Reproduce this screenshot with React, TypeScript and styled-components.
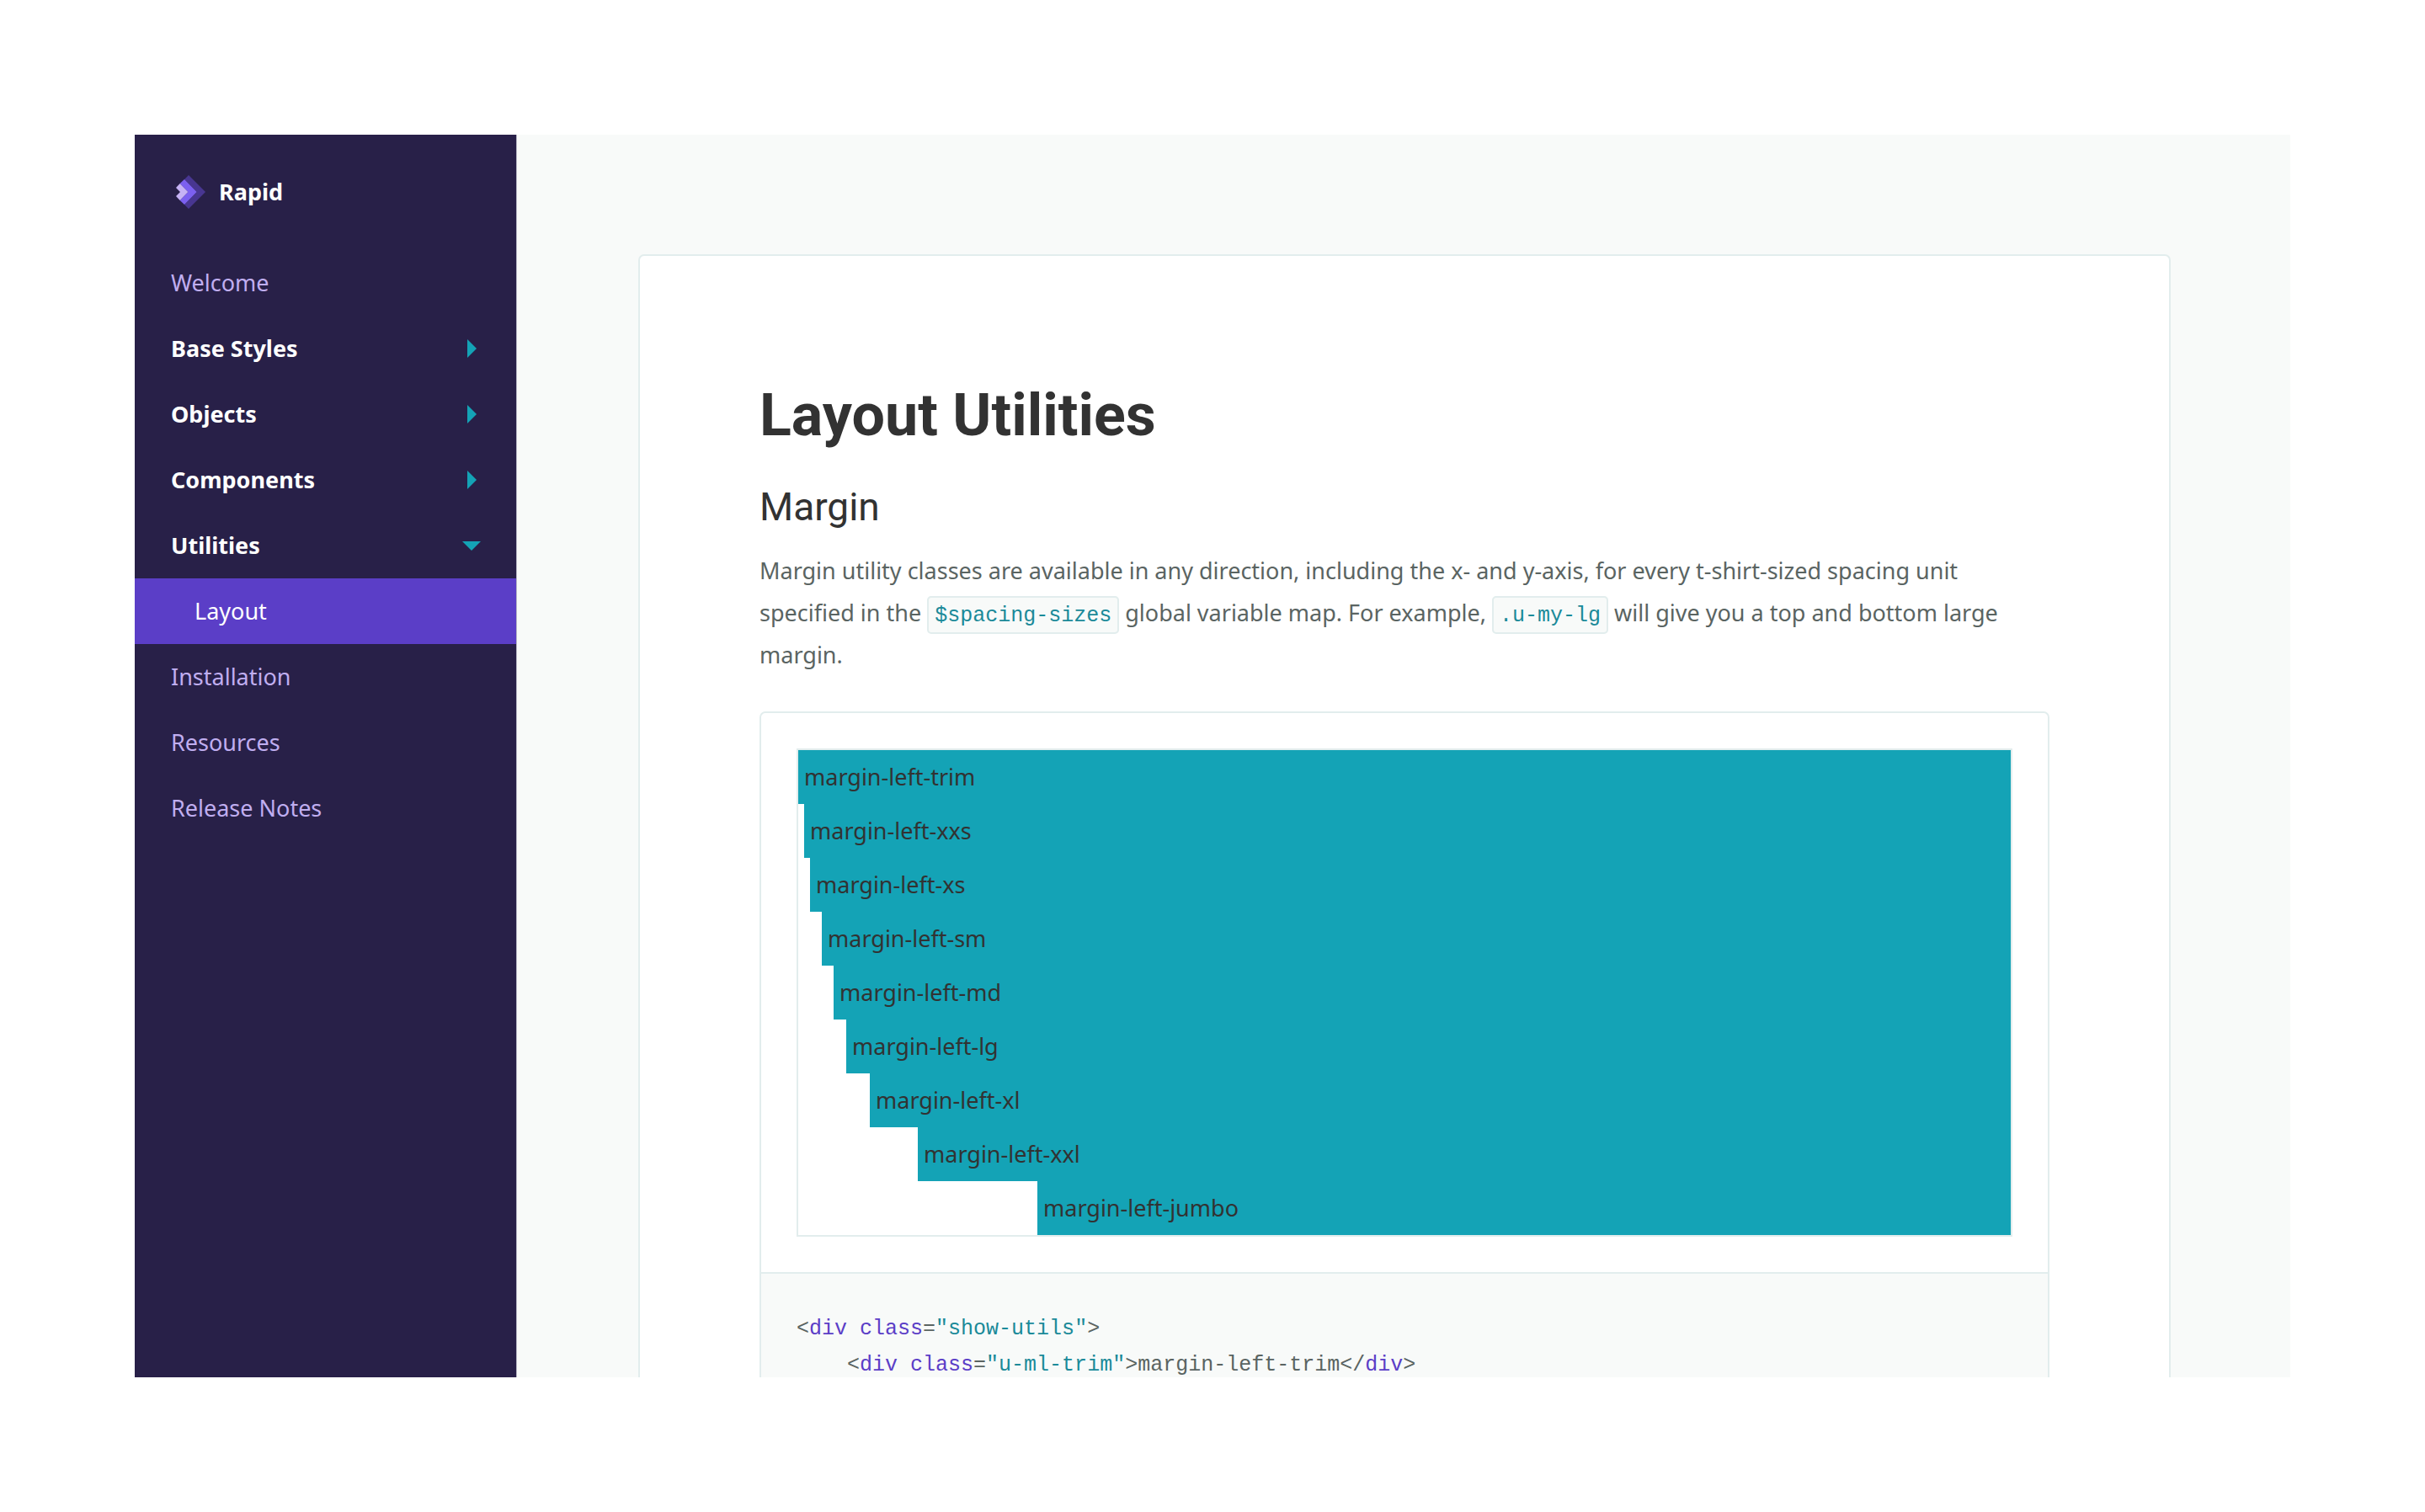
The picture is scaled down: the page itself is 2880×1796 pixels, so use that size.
import React from "react";
import styled, { createGlobalStyle, css } from "styled-components";

const color = {
  sidebar: "#282048",
  active: "#5b3ec7",
  lavender: "#c0aef0",
  teal: "#14a3b6",
  tealText: "#1b8a99",
  purpleText: "#5b3ec7",
  heading: "#323232",
  body: "#5a6462",
  border: "#e2eded",
  surface: "#f8faf9",
};

const sans = `"Noto Sans", "Open Sans", sans-serif`;
const display = `Roboto, "Noto Sans", sans-serif`;
const mono = `"Liberation Mono", "DejaVu Sans Mono", monospace`;

const GlobalStyle = createGlobalStyle`
  *, *::before, *::after { box-sizing: border-box; }
  body {
    margin: 0;
    background: #fff;
    color: ${color.body};
    font-family: ${sans};
    font-size: 27px;
    line-height: 50px;
  }
`;

const Stage = styled.div`
  height: 100vh;
  padding: 160px;
`;

const Shell = styled.div`
  display: flex;
  height: 100%;
  overflow: hidden;
  background: ${color.surface};
`;

const Sidebar = styled.aside`
  flex: 0 0 454px;
  background: ${color.sidebar};
  border-right: 1px solid #b9b8c6;
`;

const Brand = styled.a`
  display: flex;
  align-items: center;
  gap: 16px;
  padding: 43px 42px 44px 49px;
  color: #fff;
  font-weight: 700;
  text-decoration: none;
`;

const NavList = styled.ul`
  margin: 0;
  padding: 0;
  list-style: none;
`;

const navItem = css`
  display: flex;
  align-items: center;
  justify-content: space-between;
  width: 100%;
  height: 78px;
  padding: 0 42px 0 43px;
`;

const NavLink = styled.a<{ $nested?: boolean; $active?: boolean }>`
  ${navItem}
  padding-left: ${(p) => (p.$nested ? 71 : 43)}px;
  background: ${(p) => (p.$active ? color.active : "transparent")};
  color: ${(p) => (p.$active ? "#fff" : color.lavender)};
  text-decoration: none;
`;

const NavToggle = styled.button`
  ${navItem}
  border: 0;
  background: none;
  color: #fff;
  font: inherit;
  font-weight: 700;
  text-align: left;
  cursor: pointer;
`;

const CaretBox = styled.span`
  display: flex;
  justify-content: center;
  width: 22px;
`;

const Main = styled.main`
  flex: 1;
  min-width: 0;
  padding: 142px 142px 142px 144px;
`;

const Card = styled.article`
  padding: 142px;
  border: 2px solid ${color.border};
  border-radius: 7px;
  background: #fff;
`;

const Title = styled.h1`
  margin: 0 0 30px;
  color: ${color.heading};
  font: 700 70px/94px ${display};
`;

const Subtitle = styled.h2`
  margin: 0 0 19px;
  color: ${color.heading};
  font: 400 46px/64px ${display};
`;

const Text = styled.p`
  margin: 0 0 42px;
`;

const InlineCode = styled.code`
  padding: 7px 7px 5px;
  border: 2px solid ${color.border};
  border-radius: 5px;
  background: ${color.surface};
  color: ${color.tealText};
  font-family: ${mono};
  font-size: 25px;
  line-height: 1;
`;

const Example = styled.section`
  border: 2px solid ${color.border};
  border-radius: 7px;
  overflow: hidden;
`;

const Preview = styled.div`
  padding: 42px;
`;

const Frame = styled.div`
  border: 2px solid ${color.border};
`;

const Bar = styled.div<{ $indent: number }>`
  margin-left: ${(p) => p.$indent}px;
  padding: 7px;
  background: ${color.teal};
  color: ${color.heading};
`;

const Source = styled.pre`
  margin: 0;
  padding: 44px 42px;
  border-top: 2px solid ${color.border};
  background: ${color.surface};
  font: 25px/43px ${mono};

  code {
    font: inherit;
  }
`;

const Tag = styled.span`
  color: ${color.purpleText};
`;

const Value = styled.span`
  color: ${color.tealText};
`;

const Logo = () => (
  <svg width="35" height="40" viewBox="177 173 105 120" aria-hidden="true">
    <path fill="#483691" d="M222 173 282 233 222 293 207 278 251 233 207 188Z" />
    <path fill="#7c60f0" d="M207 188 251 233 207 278 191 263 220 233 191 203Z" />
    <path fill="#c6b2f5" d="M191 203 220 233 191 263 177 248 192 233 177 218Z" />
  </svg>
);

const Caret = ({ open }: { open?: boolean }) => (
  <CaretBox>
    {open ? (
      <svg width="22" height="11" viewBox="0 0 22 11" aria-hidden="true">
        <path fill={color.teal} d="M0 0H22L11 11Z" />
      </svg>
    ) : (
      <svg width="11" height="22" viewBox="0 0 11 22" aria-hidden="true">
        <path fill={color.teal} d="M0 0 11 11 0 22Z" />
      </svg>
    )}
  </CaretBox>
);

const bars: [string, number][] = [
  ["trim", 0],
  ["xxs", 7],
  ["xs", 14],
  ["sm", 28],
  ["md", 42],
  ["lg", 57],
  ["xl", 85],
  ["xxl", 142],
  ["jumbo", 284],
];

const Open = ({ name }: { name: string }) => (
  <>
    &lt;<Tag>div</Tag> <Tag>class</Tag>=<Value>"{name}"</Value>&gt;
  </>
);

export default function App() {
  return (
    <>
      <GlobalStyle />
      <Stage>
        <Shell>
          <Sidebar>
            <Brand href="#">
              <Logo />
              Rapid
            </Brand>
            <nav>
              <NavList>
                <li><NavLink href="#welcome">Welcome</NavLink></li>
                <li><NavToggle aria-expanded="false">Base Styles<Caret /></NavToggle></li>
                <li><NavToggle aria-expanded="false">Objects<Caret /></NavToggle></li>
                <li><NavToggle aria-expanded="false">Components<Caret /></NavToggle></li>
                <li>
                  <NavToggle aria-expanded="true">Utilities<Caret open /></NavToggle>
                  <NavList>
                    <li><NavLink href="#layout" $nested $active aria-current="page">Layout</NavLink></li>
                  </NavList>
                </li>
                <li><NavLink href="#installation">Installation</NavLink></li>
                <li><NavLink href="#resources">Resources</NavLink></li>
                <li><NavLink href="#release-notes">Release Notes</NavLink></li>
              </NavList>
            </nav>
          </Sidebar>
          <Main>
            <Card>
              <Title>Layout Utilities</Title>
              <Subtitle>Margin</Subtitle>
              <Text>
                Margin utility classes are available in any direction, including the x- and y-axis, for every
                t-shirt-sized spacing unit specified in the <InlineCode>$spacing-sizes</InlineCode> global
                variable map. For example, <InlineCode>.u-my-lg</InlineCode> will give you a top and bottom
                large margin.
              </Text>
              <Example>
                <Preview>
                  <Frame>
                    {bars.map(([size, indent]) => (
                      <Bar key={size} $indent={indent}>margin-left-{size}</Bar>
                    ))}
                  </Frame>
                </Preview>
                <Source>
                  <code>
                    <Open name="show-utils" />{"\n    "}
                    <Open name="u-ml-trim" />margin-left-trim&lt;/<Tag>div</Tag>&gt;
                  </code>
                </Source>
              </Example>
            </Card>
          </Main>
        </Shell>
      </Stage>
    </>
  );
}
